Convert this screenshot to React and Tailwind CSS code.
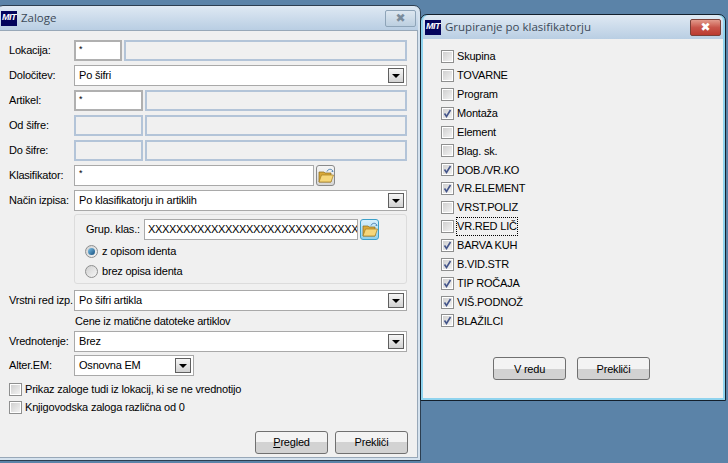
const font = { fontFamily: '"Liberation Sans", sans-serif' };

const Logo = () => (
  <span className="flex h-[15px] w-[16px] shrink-0 items-center justify-center overflow-hidden bg-[#04045c] font-['Liberation_Sans'] text-[9px] font-bold italic tracking-[-0.5px] text-white">
    MIT
  </span>
);

const Folder = ({ active }) => (
  <span className={`flex h-[21px] w-[19px] shrink-0 items-center justify-center rounded-[3px] border ${active ? 'border-[#3c9fc8] bg-gradient-to-b from-[#d8f0fb] to-[#8fd0ec]' : 'border-[#8a8a8a] bg-gradient-to-b from-[#f6f6f6] to-[#d6d6d6]'}`}>
    <svg width="16" height="15" viewBox="0 0 16 15">
      <path d="M1 4h5l1 1h6v9H1z" fill="#d9a93a" stroke="#8a6a1c" strokeWidth="0.7" />
      <path d="M1 14l2.5-7H15.5L13 14z" fill="#f6d77a" stroke="#a37c20" strokeWidth="0.7" />
      <path d="M9 3.5C10 1 13 0.6 14.5 2.5" fill="none" stroke="#4a7fb0" strokeWidth="1" />
      <path d="M15.5 4l-2.2-.2 1.4-1.8z" fill="#4a7fb0" />
    </svg>
  </span>
);

const Check = ({ checked }) => (
  <span className="flex h-[13px] w-[13px] shrink-0 items-center justify-center border border-[#8e8f8f] bg-white p-[1px]">
    <span className="relative block h-full w-full bg-gradient-to-br from-[#d0d0d0] to-[#f2f2f2]">
      {checked && (
        <svg className="absolute -left-[1px] -top-[1px]" width="11" height="11" viewBox="0 0 11 11">
          <path d="M2.5 5.5l2 3L8.5 2" fill="none" stroke="#44558a" strokeWidth="1.6" />
        </svg>
      )}
    </span>
  </span>
);

const Radio = ({ checked }) => (
  <span className="flex h-[13px] w-[13px] shrink-0 items-center justify-center rounded-full border border-[#8e8f8f] bg-gradient-to-br from-[#d0d0d0] to-[#f6f6f6]">
    {checked && <span className="block h-[7px] w-[7px] rounded-full bg-gradient-to-br from-[#7fc4ea] to-[#14507e]" />}
  </span>
);

const Combo = ({ value, className = '' }) => (
  <div className={`flex h-[21px] items-center border border-[#a9a9a9] bg-white pl-[4px] pr-[2px] ${className}`}>
    <span className="flex-1">{value}</span>
    <span className="flex h-[15px] w-[16px] items-center justify-center border border-[#5f5f5f] bg-gradient-to-b from-[#f6f6f6] to-[#d2d2d2]">
      <span className="h-0 w-0 border-x-[4px] border-t-[4px] border-x-transparent border-t-black" />
    </span>
  </div>
);

const Field = ({ label, children, className = '' }) => (
  <div className={`flex h-[21px] items-center ${className}`}>
    <span className="w-[74px] shrink-0 whitespace-nowrap pl-[9px]">{label}</span>
    {children}
  </div>
);

const Split = ({ width, star }) => (
  <div className="flex h-full w-[333px] gap-[2px]">
    <div className={`h-full border-2 px-[3px] text-[9px] leading-[14px] ${width} ${star ? 'border-[#b0b0b0] bg-white' : 'border-[#b3c4d8] bg-[#f0f0f0]'}`}>{star && '*'}</div>
    <div className="h-full flex-1 border-2 border-[#b3c4d8] bg-[#f0f0f0]" />
  </div>
);

const Button = ({ children, className = '' }) => (
  <button className={`flex h-[23px] w-[73px] items-center justify-center rounded-[3px] border border-[#707070] bg-gradient-to-b from-[#f3f3f3] from-50% to-[#d2d2d2] to-50% ${className}`}>
    {children}
  </button>
);

const TitleBar = ({ title, close }) => (
  <div className="flex h-[24px] items-center rounded-t-[6px] bg-gradient-to-b from-[#dfe9f3] to-[#b9cee3] pl-[2px] pr-[2px] font-['Open_Sans'] text-[11.5px] tracking-normal text-[#3c4a58]">
    <Logo />
    <span className="ml-[4px] flex-1">{title}</span>
    {close ? (
      <span className="flex h-[17px] w-[31px] items-center justify-center rounded-[2px] border border-[#7a4038] bg-gradient-to-b from-[#e29a8c] via-[#c8554a] to-[#bb3a30] font-['DejaVu_Sans'] text-[12px] leading-none text-white">✖</span>
    ) : (
      <span className="flex h-[17px] w-[31px] items-center justify-center rounded-[2px] border border-[#8ea4b8] bg-gradient-to-b from-[#dde7f0] to-[#bccfe0] font-['DejaVu_Sans'] text-[12px] leading-none text-[#7a8b9b]">✖</span>
    )}
  </div>
);

const groups = [
  ['Skupina', false], ['TOVARNE', false], ['Program', false], ['Montaža', true], ['Element', false],
  ['Blag. sk.', false], ['DOB./VR.KO', true], ['VR.ELEMENT', true], ['VRST.POLIZ', false], ['VR.RED LIČ', false, true],
  ['BARVA KUH', true], ['B.VID.STR', true], ['TIP ROČAJA', true], ['VIŠ.PODNOŽ', true], ['BLAŽILCI', true],
];

export default function App() {
  return (
    <div className="relative h-[463px] w-[728px] overflow-hidden bg-[#5b83a8] text-[11px] tracking-[-0.2px] text-black" style={font}>
      {/* Zaloge */}
      <div className="absolute left-[-4px] top-[5px] h-[456px] w-[425px] rounded-t-[7px] border border-[#2c3e50] bg-[#d5e2ee] px-[2px] pb-[3px]">
        <TitleBar title="Zaloge" />
        <div className="flex h-[428px] flex-col gap-[4px] border border-[#98a8b8] bg-[#f0f0f0] pt-[9px]">
          <Field label="Lokacija:"><Split width="w-[48px]" star /></Field>
          <Field label="Določitev:"><Combo value="Po šifri" className="w-[333px]" /></Field>
          <Field label="Artikel:"><Split width="w-[69px]" star /></Field>
          <Field label="Od šifre:"><Split width="w-[69px]" /></Field>
          <Field label="Do šifre:"><Split width="w-[69px]" /></Field>
          <Field label="Klasifikator:">
            <div className="h-full w-[240px] border border-[#a9a9a9] bg-white px-[4px] text-[9px] leading-[14px]">*</div>
            <span className="ml-[2px]"><Folder /></span>
          </Field>
          <Field label="Način izpisa:"><Combo value="Po klasifikatorju in artiklih" className="w-[333px]" /></Field>
          <div className="ml-[74px] mt-[-1px] flex h-[70px] w-[333px] flex-col rounded-[3px] border border-[#dcdcdc] pt-[4px]">
            <div className="flex h-[21px] items-center">
              <span className="w-[69px] whitespace-nowrap pl-[11px]">Grup. klas.:</span>
              <div className="flex h-full w-[214px] items-center overflow-hidden whitespace-nowrap border border-[#a9a9a9] bg-white pl-[3px] tracking-[-0.33px]">XXXXXXXXXXXXXXXXXXXXXXXXXXXXXX</div>
              <span className="ml-[2px]"><Folder active /></span>
            </div>
            <div className="mt-[5px] flex h-[13px] items-center gap-[4px] pl-[10px]"><Radio checked />z opisom identa</div>
            <div className="mt-[7px] flex h-[13px] items-center gap-[4px] pl-[10px]"><Radio />brez opisa identa</div>
          </div>
          <Field label="Vrstni red izp." className="mt-[2px]"><Combo value="Po šifri artikla" className="w-[333px]" /></Field>
          <div className="ml-[75px] -mt-[1px] h-[15px] leading-[15px]">Cene iz matične datoteke artiklov</div>
          <Field label="Vrednotenje:" className="-mt-[2px]"><Combo value="Brez" className="w-[333px]" /></Field>
          <Field label="Alter.EM:" className="-mt-[1px]"><Combo value="Osnovna EM" className="w-[120px]" /></Field>
          <div className="ml-[9px] mt-[2px] flex h-[14px] items-center gap-[3px]"><Check />Prikaz zaloge tudi iz lokacij, ki se ne vrednotijo</div>
          <div className="ml-[9px] flex h-[14px] items-center gap-[3px]"><Check />Knjigovodska zaloga različna od 0</div>
          <div className="mt-[13px] flex justify-end gap-[7px] pr-[9px]">
            <Button><span><u>P</u>regled</span></Button>
            <Button>Prekliči</Button>
          </div>
        </div>
      </div>

      {/* Grupiranje po klasifikatorju */}
      <div className="absolute left-[420px] top-[14px] h-[387px] w-[306px] rounded-t-[7px] border border-[#14202c] bg-[#8fd3ee] px-[2px] pb-[2px]">
        <TitleBar title="Grupiranje po klasifikatorju" close />
        <div className="flex h-[359px] flex-col bg-[#f0f0f0] pl-[18px] pt-[8px]">
          <div className="flex flex-col">
            {groups.map(([label, checked, focused]) => (
              <div key={label} className="flex h-[18.9px] items-center gap-[3px]">
                <Check checked={checked} />
                <span className={focused ? 'outline-1 outline-dotted outline-black' : ''}>{label}</span>
              </div>
            ))}
          </div>
          <div className="ml-[52px] mt-[27px] flex gap-[11px]">
            <Button>V redu</Button>
            <Button>Prekliči</Button>
          </div>
        </div>
      </div>
    </div>
  );
}
